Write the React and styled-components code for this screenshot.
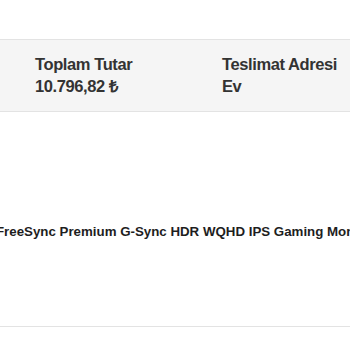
import React from "react";
import styled, { createGlobalStyle } from "styled-components";

const Global = createGlobalStyle`
  html, body { margin: 0; padding: 0; background: #fff; }
  body { font-family: "Liberation Sans", Arial, sans-serif; overflow: hidden; }
`;

const Page = styled.div`
  width: 350px;
  height: 350px;
  overflow: hidden;
  display: flex;
  flex-direction: column;
`;

const TopSpace = styled.div`
  height: 39px;
  flex-shrink: 0;
`;

const Summary = styled.div`
  background: #f5f5f5;
  border-top: 1px solid #e3e3e3;
  border-bottom: 1px solid #e3e3e3;
  height: 73px;
  flex-shrink: 0;
  box-sizing: border-box;
  display: grid;
  grid-template-columns: 187px 1fr;
  padding: 13px 0 0 35px;
`;

const Field = styled.div`
  display: flex;
  flex-direction: column;
  font-size: 16.5px;
  letter-spacing: -0.4px;
  font-weight: 700;
  color: #333;
  line-height: 22px;
  white-space: nowrap;
`;

const Gap = styled.div`
  height: 110px;
  flex-shrink: 0;
`;

const Title = styled.div`
  font-size: 13.3px;
  font-weight: 700;
  color: #1e1e1e;
  white-space: nowrap;
  line-height: 20px;
  margin-left: -4px;
  flex-shrink: 0;
`;

const Spacer = styled.div`
  height: 84px;
  flex-shrink: 0;
`;

const Divider = styled.div`
  border-top: 1px solid #e3e3e3;
  flex-shrink: 0;
`;

export default function App() {
  return (
    <>
      <Global />
      <Page>
        <TopSpace />
        <Summary>
          <Field>
            <span>Toplam Tutar</span>
            <span>10.796,82 ₺</span>
          </Field>
          <Field>
            <span>Teslimat Adresi</span>
            <span>Ev</span>
          </Field>
        </Summary>
        <Gap />
        <Title>FreeSync Premium G-Sync HDR WQHD IPS Gaming Monitör</Title>
        <Spacer />
        <Divider />
      </Page>
    </>
  );
}
